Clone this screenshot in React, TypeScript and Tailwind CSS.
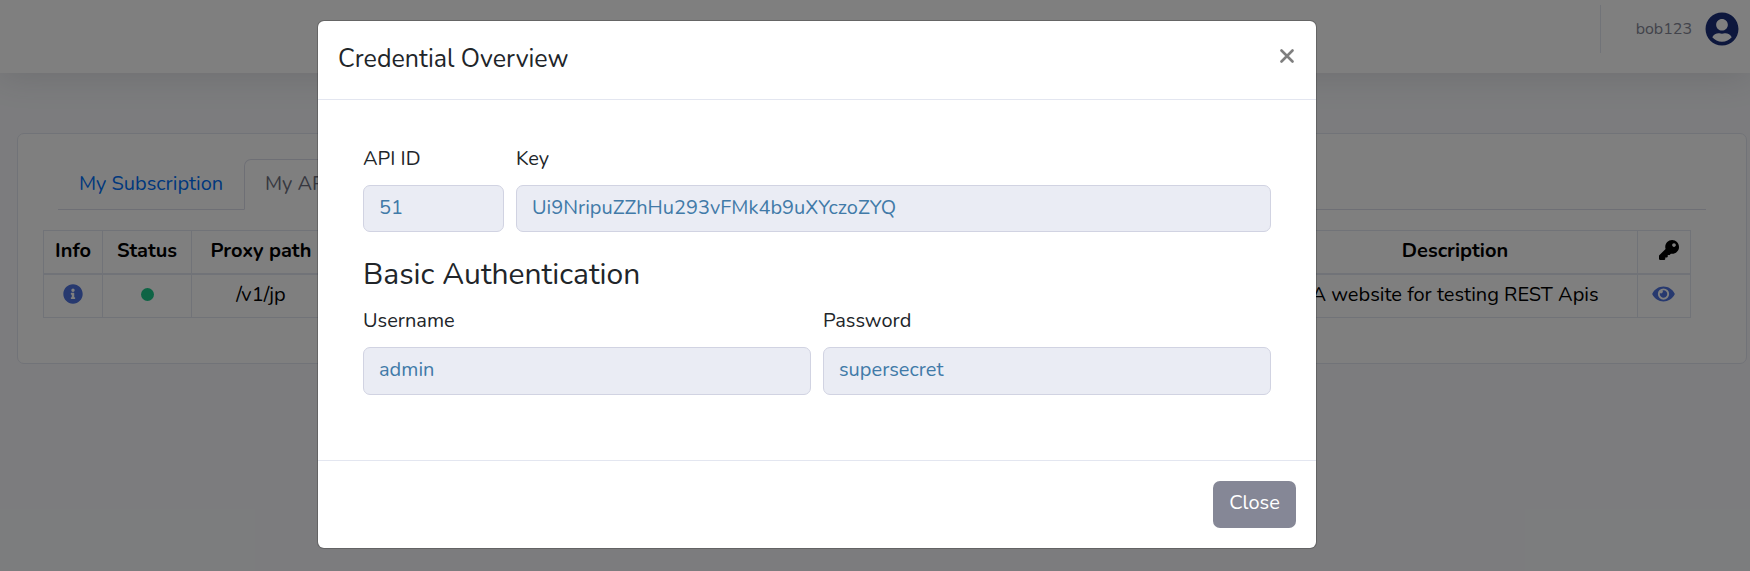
import React from "react";
import { FaEye, FaInfoCircle, FaKey, FaUserCircle } from "react-icons/fa";

function TopBar() {
  return (
    <header className="relative flex h-[73px] shrink-0 justify-end bg-white shadow-[0_3px_35px_rgba(58,59,69,0.15)]">
      <div className="mt-[5px] h-12 w-px bg-[#e3e6f0]" />
      <div className="flex h-[58px] items-center pl-[35px] pr-[11px]">
        <span className="mr-[13px] text-base leading-6 text-[#858796]">bob123</span>
        <FaUserCircle className="size-[34px] text-[#1a2f7a]" />
      </div>
    </header>
  );
}

function Tabs() {
  return (
    <nav className="ml-10 mr-10 flex border-b border-[#dddfeb]">
      <a className="w-[186px] pb-[9px] pl-[21px] pt-[10px] text-[#0070fa]">My Subscription</a>
      <a className="-mb-px w-[120px] rounded-t-[7px] border border-[#dddfeb] border-b-white bg-white pb-2.5 pl-5 pt-[9px] text-[#6e707e]">
        My APIs
      </a>
    </nav>
  );
}

function ApiTable() {
  const head = "border border-b-2 border-[#e3e6f0] p-0 pb-px text-center font-bold";
  const iconHead = "border border-b-2 border-[#e3e6f0] p-0 pb-[3px]";
  const cell = "border border-[#e3e6f0] p-0 pb-0.5 text-center";
  const iconCell = "border border-[#e3e6f0] p-0 pb-1 text-center";
  return (
    <table className="ml-[25px] mt-5 w-[1648px] table-fixed border-collapse text-black">
      <colgroup>
        <col className="w-[59px]" />
        <col className="w-[89px]" />
        <col className="w-[139px]" />
        <col />
        <col className="w-[365px]" />
        <col className="w-[53px]" />
      </colgroup>
      <thead>
        <tr className="h-[43px]">
          <th className={head}>Info</th>
          <th className={head}>Status</th>
          <th className={head}>Proxy path</th>
          <th className={head}></th>
          <th className={head}>Description</th>
          <th className={iconHead}>
            <FaKey className="ml-[21px] size-5" />
          </th>
        </tr>
      </thead>
      <tbody>
        <tr className="h-11">
          <td className={iconCell}>
            <FaInfoCircle className="mx-auto size-5 text-[#4e73df]" />
          </td>
          <td className={cell}>
            <div className="mx-auto size-[13px] rounded-full bg-[#1cc88a]" />
          </td>
          <td className={cell}>/v1/jp</td>
          <td className={cell}></td>
          <td className={cell}>A website for testing REST Apis</td>
          <td className={iconCell}>
            <FaEye className="ml-[14px] h-5 w-[23px] text-[#4e73df]" />
          </td>
        </tr>
      </tbody>
    </table>
  );
}

function Field({ label, value, className, box = "h-12" }: { label: string; value: string; className: string; box?: string }) {
  return (
    <label className={`flex flex-col ${className}`}>
      <span className="mb-[11px] leading-[30px]">{label}</span>
      <span className={`${box} rounded-[7px] border border-[#d1d3e2] bg-[#eaecf4] pl-[15px] pt-[7px] leading-[30px] text-[#417aa8]`}>
        {value}
      </span>
    </label>
  );
}

function CredentialModal() {
  return (
    <section className="flex h-[529px] w-[1000px] flex-col rounded-[7px] border border-black/20 bg-white bg-clip-padding text-[#212529]">
      <div className="flex h-[79px] justify-between border-b border-[#e3e6f0] px-5 pt-5">
        <h5 className="text-[25px] leading-[37px]">Credential Overview</h5>
        <svg viewBox="0 0 14 14" className="mr-[2px] mt-2 size-[14px]" fill="none" stroke="#7f7f7f" strokeWidth="2.6" strokeLinecap="round">
          <path d="M1.5 1.5l11 11M12.5 1.5l-11 11" />
        </svg>
      </div>
      <div className="flex-1 px-[45px] pt-11">
        <div className="flex gap-3">
          <Field label="API ID" value="51" className="w-[141px]" box="h-[47px]" />
          <Field label="Key" value="Ui9NripuZZhHu293vFMk4b9uXYczoZYQ" className="flex-1" box="h-[47px]" />
        </div>
        <h4 className="mt-[25px] text-[30px] leading-9">Basic Authentication</h4>
        <div className="mt-[13px] flex gap-3">
          <Field label="Username" value="admin" className="flex-1" />
          <Field label="Password" value="supersecret" className="flex-1" />
        </div>
      </div>
      <div className="flex h-[88px] justify-end border-t border-[#e3e6f0] px-5 pt-5">
        <button className="h-[47px] w-[83px] rounded-[7px] bg-[#858796] pb-1 text-white">Close</button>
      </div>
    </section>
  );
}

export default function App() {
  return (
    <div className="relative h-[571px] w-[1750px] overflow-hidden bg-[#f8f9fc] text-xl leading-[30px] [font-family:Nunito,'Noto_Sans',sans-serif]">
      <TopBar />
      <main className="ml-[17px] mt-[60px] h-[231px] w-[1730px] rounded-[7px] border border-[#e3e6f0] bg-white pt-[25px]">
        <Tabs />
        <ApiTable />
      </main>
      <div className="absolute inset-0 flex items-start bg-black/50 pl-[317px] pt-5">
        <CredentialModal />
      </div>
    </div>
  );
}
